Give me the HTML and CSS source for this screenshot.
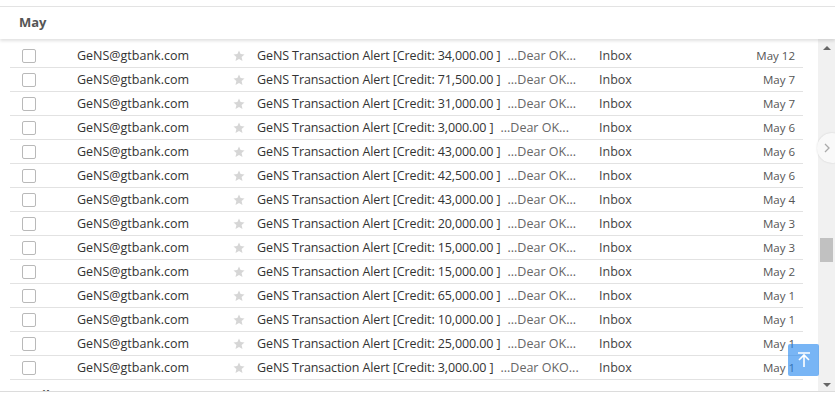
FILE: index.html
```html
<!DOCTYPE html>
<html lang="en">
<head>
    <meta charset="UTF-8">
    <title>Mail - May</title>
    <link rel="stylesheet" href="styles.css">
</head>
<body>
    <div class="page">
        <div class="month-head">May</div>

        <div class="mail-pane">
            <div class="mail-list">
                <div class="row"><span class="check"></span><span class="from">GeNS@gtbank.com</span><span class="star"><svg viewBox="0 0 12 12"><path d="M6 0.5l1.6 3.6 3.9.4-2.9 2.6.9 3.9L6 9l-3.5 2 .9-3.9L.5 4.5l3.9-.4z"/></svg></span><span class="subject">GeNS Transaction Alert [Credit: 34,000.00 ]<span class="snippet">...Dear OK...</span></span><span class="label">Inbox</span><span class="date">May 12</span></div>
                <div class="row"><span class="check"></span><span class="from">GeNS@gtbank.com</span><span class="star"><svg viewBox="0 0 12 12"><path d="M6 0.5l1.6 3.6 3.9.4-2.9 2.6.9 3.9L6 9l-3.5 2 .9-3.9L.5 4.5l3.9-.4z"/></svg></span><span class="subject">GeNS Transaction Alert [Credit: 71,500.00 ]<span class="snippet">...Dear OK...</span></span><span class="label">Inbox</span><span class="date">May 7</span></div>
                <div class="row"><span class="check"></span><span class="from">GeNS@gtbank.com</span><span class="star"><svg viewBox="0 0 12 12"><path d="M6 0.5l1.6 3.6 3.9.4-2.9 2.6.9 3.9L6 9l-3.5 2 .9-3.9L.5 4.5l3.9-.4z"/></svg></span><span class="subject">GeNS Transaction Alert [Credit: 31,000.00 ]<span class="snippet">...Dear OK...</span></span><span class="label">Inbox</span><span class="date">May 7</span></div>
                <div class="row"><span class="check"></span><span class="from">GeNS@gtbank.com</span><span class="star"><svg viewBox="0 0 12 12"><path d="M6 0.5l1.6 3.6 3.9.4-2.9 2.6.9 3.9L6 9l-3.5 2 .9-3.9L.5 4.5l3.9-.4z"/></svg></span><span class="subject">GeNS Transaction Alert [Credit: 3,000.00 ]<span class="snippet">...Dear OK...</span></span><span class="label">Inbox</span><span class="date">May 6</span></div>
                <div class="row"><span class="check"></span><span class="from">GeNS@gtbank.com</span><span class="star"><svg viewBox="0 0 12 12"><path d="M6 0.5l1.6 3.6 3.9.4-2.9 2.6.9 3.9L6 9l-3.5 2 .9-3.9L.5 4.5l3.9-.4z"/></svg></span><span class="subject">GeNS Transaction Alert [Credit: 43,000.00 ]<span class="snippet">...Dear OK...</span></span><span class="label">Inbox</span><span class="date">May 6</span></div>
                <div class="row"><span class="check"></span><span class="from">GeNS@gtbank.com</span><span class="star"><svg viewBox="0 0 12 12"><path d="M6 0.5l1.6 3.6 3.9.4-2.9 2.6.9 3.9L6 9l-3.5 2 .9-3.9L.5 4.5l3.9-.4z"/></svg></span><span class="subject">GeNS Transaction Alert [Credit: 42,500.00 ]<span class="snippet">...Dear OK...</span></span><span class="label">Inbox</span><span class="date">May 6</span></div>
                <div class="row"><span class="check"></span><span class="from">GeNS@gtbank.com</span><span class="star"><svg viewBox="0 0 12 12"><path d="M6 0.5l1.6 3.6 3.9.4-2.9 2.6.9 3.9L6 9l-3.5 2 .9-3.9L.5 4.5l3.9-.4z"/></svg></span><span class="subject">GeNS Transaction Alert [Credit: 43,000.00 ]<span class="snippet">...Dear OK...</span></span><span class="label">Inbox</span><span class="date">May 4</span></div>
                <div class="row"><span class="check"></span><span class="from">GeNS@gtbank.com</span><span class="star"><svg viewBox="0 0 12 12"><path d="M6 0.5l1.6 3.6 3.9.4-2.9 2.6.9 3.9L6 9l-3.5 2 .9-3.9L.5 4.5l3.9-.4z"/></svg></span><span class="subject">GeNS Transaction Alert [Credit: 20,000.00 ]<span class="snippet">...Dear OK...</span></span><span class="label">Inbox</span><span class="date">May 3</span></div>
                <div class="row"><span class="check"></span><span class="from">GeNS@gtbank.com</span><span class="star"><svg viewBox="0 0 12 12"><path d="M6 0.5l1.6 3.6 3.9.4-2.9 2.6.9 3.9L6 9l-3.5 2 .9-3.9L.5 4.5l3.9-.4z"/></svg></span><span class="subject">GeNS Transaction Alert [Credit: 15,000.00 ]<span class="snippet">...Dear OK...</span></span><span class="label">Inbox</span><span class="date">May 3</span></div>
                <div class="row"><span class="check"></span><span class="from">GeNS@gtbank.com</span><span class="star"><svg viewBox="0 0 12 12"><path d="M6 0.5l1.6 3.6 3.9.4-2.9 2.6.9 3.9L6 9l-3.5 2 .9-3.9L.5 4.5l3.9-.4z"/></svg></span><span class="subject">GeNS Transaction Alert [Credit: 15,000.00 ]<span class="snippet">...Dear OK...</span></span><span class="label">Inbox</span><span class="date">May 2</span></div>
                <div class="row"><span class="check"></span><span class="from">GeNS@gtbank.com</span><span class="star"><svg viewBox="0 0 12 12"><path d="M6 0.5l1.6 3.6 3.9.4-2.9 2.6.9 3.9L6 9l-3.5 2 .9-3.9L.5 4.5l3.9-.4z"/></svg></span><span class="subject">GeNS Transaction Alert [Credit: 65,000.00 ]<span class="snippet">...Dear OK...</span></span><span class="label">Inbox</span><span class="date">May 1</span></div>
                <div class="row"><span class="check"></span><span class="from">GeNS@gtbank.com</span><span class="star"><svg viewBox="0 0 12 12"><path d="M6 0.5l1.6 3.6 3.9.4-2.9 2.6.9 3.9L6 9l-3.5 2 .9-3.9L.5 4.5l3.9-.4z"/></svg></span><span class="subject">GeNS Transaction Alert [Credit: 10,000.00 ]<span class="snippet">...Dear OK...</span></span><span class="label">Inbox</span><span class="date">May 1</span></div>
                <div class="row"><span class="check"></span><span class="from">GeNS@gtbank.com</span><span class="star"><svg viewBox="0 0 12 12"><path d="M6 0.5l1.6 3.6 3.9.4-2.9 2.6.9 3.9L6 9l-3.5 2 .9-3.9L.5 4.5l3.9-.4z"/></svg></span><span class="subject">GeNS Transaction Alert [Credit: 25,000.00 ]<span class="snippet">...Dear OK...</span></span><span class="label">Inbox</span><span class="date">May 1</span></div>
                <div class="row"><span class="check"></span><span class="from">GeNS@gtbank.com</span><span class="star"><svg viewBox="0 0 12 12"><path d="M6 0.5l1.6 3.6 3.9.4-2.9 2.6.9 3.9L6 9l-3.5 2 .9-3.9L.5 4.5l3.9-.4z"/></svg></span><span class="subject">GeNS Transaction Alert [Credit: 3,000.00 ]<span class="snippet">...Dear OKO...</span></span><span class="label">Inbox</span><span class="date">May 1</span></div>

                <div class="month-head next">April</div>
            </div>

            <div class="scrollbar">
                <span class="arrow up"></span>
                <span class="thumb"></span>
                <span class="arrow down"></span>
            </div>
        </div>
    </div>

    <button class="pager-next" aria-label="Next"><svg viewBox="0 0 8 12"><path d="M2 2l4 4-4 4"/></svg></button>
    <button class="to-top" aria-label="Back to top"><svg viewBox="0 0 20 20"><path d="M4 3h12M10 17V5M5 10l5-5 5 5"/></svg></button>
</body>
</html>
```

FILE: styles.css
```css
body {
    margin: 0;
    height: 398px;
    overflow: hidden;
    position: relative;
    background: #fff;
    font-family: 'Open Sans', 'Noto Sans', sans-serif;
    color: #333;
}
.page {
    margin-top: 6px;
    border-top: 1px solid #e4e4e4;
}
.month-head {
    height: 32px;
    line-height: 31px;
    padding-left: 19px;
    font-size: 13px;
    font-weight: 700;
    color: #555;
    background: #fff;
    position: relative;
    z-index: 1;
    box-shadow: 0 2px 3px rgba(0,0,0,0.12);
}
.month-head.next {
    box-shadow: none;
    z-index: 0;
    line-height: 30px;
}
.mail-pane {
    display: flex;
    height: 352px;
    border-bottom: 1px solid #dcdcdc;
}
.mail-list {
    flex: 1;
    overflow: hidden;
    padding-top: 5px;
}
.row {
    display: grid;
    grid-template-columns: 55px 155px 25px 342px 1fr auto;
    align-items: center;
    height: 23px;
    width: 773px;
    margin-left: 10px;
    padding: 0 8px 0 12px;
    border-bottom: 1px solid #e2e2e2;
    font-size: 12.5px;
    white-space: nowrap;
}
.check {
    width: 12px;
    height: 12px;
    border: 1px solid #b9b9b9;
    border-radius: 2px;
    background: #fff;
}
.from {
    color: #333;
}
.star svg {
    width: 12px;
    height: 12px;
    fill: #d6d6d6;
    display: block;
    margin-left: 1px;
}
.subject {
    color: #333;
    overflow: hidden;
    letter-spacing: -0.1px;
}
.snippet {
    color: #666;
    margin-left: 7px;
    letter-spacing: 0;
}
.label {
    color: #444;
}
.date {
    font-size: 11.5px;
    color: #555;
    text-align: right;
}
.scrollbar {
    width: 17px;
    background: #f1f1f1;
    display: flex;
    flex-direction: column;
    align-items: center;
    position: relative;
}
.arrow {
    width: 0;
    height: 0;
    border-left: 4px solid transparent;
    border-right: 4px solid transparent;
}
.arrow.up {
    margin-top: 7px;
    border-bottom: 4px solid #666;
}
.arrow.down {
    margin-top: auto;
    margin-bottom: 4px;
    border-top: 4px solid #666;
}
.thumb {
    width: 13px;
    height: 24px;
    background: #c1c1c1;
    margin-top: 188px;
}
.pager-next {
    position: absolute;
    left: 817px;
    top: 133px;
    width: 30px;
    height: 30px;
    padding: 0;
    border: none;
    border-radius: 50%;
    background: #f9f9f9;
    box-shadow: 0 0 2px rgba(0,0,0,0.15);
}
.pager-next svg {
    width: 8px;
    height: 12px;
    fill: none;
    stroke: #aaa;
    stroke-width: 1.3;
    display: block;
    margin-left: 6px;
}
.to-top {
    position: absolute;
    left: 788px;
    top: 344px;
    width: 31px;
    height: 32px;
    padding: 0;
    border: none;
    border-radius: 2px;
    background: rgba(30,132,238,0.6);
}
.to-top svg {
    width: 20px;
    height: 20px;
    fill: none;
    stroke: #fff;
    stroke-width: 1.6;
    display: block;
    margin: 0 auto;
}
```
